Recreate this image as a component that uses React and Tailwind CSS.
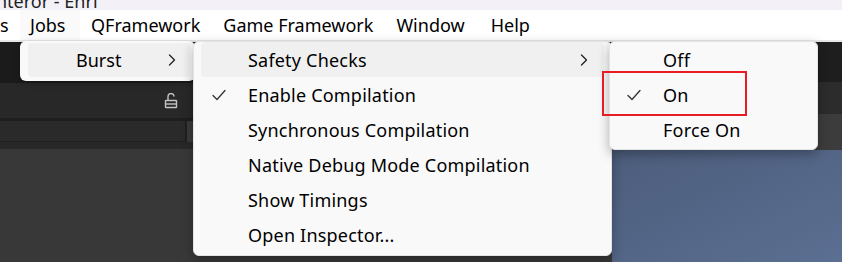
import React from 'react';

const font = { fontFamily: '"Noto Sans", "Open Sans", sans-serif' };

const Check = () => (
    <svg width="14" height="12" viewBox="0 0 14 12" fill="none">
        <path d="M1 6.5 L5 10.5 L13 1.5" stroke="#333" strokeWidth="1.3" strokeLinecap="round" strokeLinejoin="round" />
    </svg>
);

const Chevron = () => (
    <svg width="8" height="12" viewBox="0 0 8 12" fill="none">
        <path d="M1.5 1 L6.5 6 L1.5 11" stroke="#222" strokeWidth="1.3" strokeLinecap="round" strokeLinejoin="round" />
    </svg>
);

const Lock = () => (
    <svg width="14" height="16" viewBox="0 0 14 16" fill="none">
        <path d="M4 7 V3.5 A3 3 0 0 1 10 3.5" stroke="#c4c4c4" strokeWidth="1.4" />
        <rect x="1.5" y="7.5" width="11" height="7" rx="0.5" stroke="#c4c4c4" strokeWidth="1.4" />
        <line x1="1.5" y1="11" x2="12.5" y2="11" stroke="#c4c4c4" strokeWidth="1.4" />
    </svg>
);

const Row = ({ label, checked, sub, hover, checkW = 'w-[47px] pl-[11px]' }) => (
    <div className={`flex items-center h-[35px] mx-[7px] rounded-[4px] ${hover ? 'bg-[#f0f0f0]' : ''}`}>
        <div className={`${checkW} flex items-center shrink-0`}>
            {checked && <Check />}
        </div>
        <span className="text-[18px] text-black leading-none flex-1 tracking-[0.2px]">{label}</span>
        {sub && <span className="pr-[16px]"><Chevron /></span>}
    </div>
);

export default function App() {
    return (
        <div className="relative w-[842px] h-[262px] overflow-hidden bg-[#383838]" style={font}>
            {/* title bar */}
            <div className="h-[10px] bg-[#f3f1f7] overflow-hidden relative">
                <span className="absolute left-[-4px] top-[-12px] text-[18px] text-[#222]">nteror - Enri</span>
            </div>
            {/* menu bar */}
            <div className="h-[30px] bg-white flex items-center text-[18px] text-black">
                <span className="w-[20px] overflow-hidden">s</span>
                <span className="px-[10px] h-full flex items-center bg-[#fafafa] w-[60px]">Jobs</span>
                <span className="ml-[11px]">QFramework</span>
                <span className="ml-[23px]">Game Framework</span>
                <span className="ml-[23px]">Window</span>
                <span className="ml-[26px]">Help</span>
            </div>
            <div className="h-[2px] bg-[#e8e8e8]" />

            {/* editor body */}
            <div className="flex">
                <div className="w-[612px] flex flex-col">
                    <div className="h-[41px] bg-[#1b1b1b]" />
                    <div className="h-[35px] bg-[#282828] flex items-center justify-end pr-[434px]">
                        <Lock />
                    </div>
                    <div className="h-[3px] bg-[#1e1e1e]" />
                    <div className="h-[21px] bg-[#282828] flex">
                        <div className="w-[185px] bg-[#2a2a2a] border-b border-[#202020]" />
                        <div className="w-[2px] bg-[#1f1f1f]" />
                        <div className="w-[8px] bg-[#3a3a3a]" />
                    </div>
                    <div className="h-[7px] bg-[#282828]" />
                    <div className="flex-1 bg-[#383838]" />
                </div>
                <div className="flex-1 flex flex-col">
                    <div className="h-[40px] bg-[#1e1e1e]" />
                    <div className="h-[32px] bg-[#2c2c2c]" />
                    <div className="h-[36px] bg-[#3c3c3c]" />
                    <div className="h-[112px] bg-gradient-to-br from-[#4c5d7c] to-[#5b6f92]" />
                </div>
            </div>

            {/* Jobs menu */}
            <div className="absolute left-[20px] top-[41px] w-[175px] h-[40px] bg-[#f9f9f9] rounded-[6px] shadow-[0_2px_6px_rgba(0,0,0,0.25)] pt-[2px]">
                <div className="flex items-center h-[34px] ml-[8px] mr-[5px] rounded-[4px] bg-[#f0f0f0]">
                    <span className="pl-[48px] text-[18px] text-black flex-1 leading-none">Burst</span>
                    <span className="pr-[14px]"><Chevron /></span>
                </div>
            </div>

            {/* Burst submenu */}
            <div className="absolute left-[193px] top-[41px] w-[419px] h-[215px] bg-[#f9f9f9] rounded-[6px] border border-[#e4e4e4] shadow-[0_4px_12px_rgba(0,0,0,0.3)]">
                <Row label="Safety Checks" sub hover />
                <Row label="Enable Compilation" checked />
                <Row label="Synchronous Compilation" />
                <Row label="Native Debug Mode Compilation" />
                <Row label="Show Timings" />
                <Row label="Open Inspector..." />
            </div>

            {/* Safety Checks submenu */}
            <div className="absolute left-[609px] top-[41px] w-[209px] h-[109px] bg-[#f9f9f9] rounded-[6px] border border-[#e4e4e4] shadow-[0_4px_12px_rgba(0,0,0,0.3)]">
                <Row label="Off" checkW="w-[46px] pl-[10px]" />
                <Row label="On" checked checkW="w-[46px] pl-[10px]" />
                <Row label="Force On" checkW="w-[46px] pl-[10px]" />
            </div>

            {/* red highlight box */}
            <div className="absolute left-[602px] top-[71px] w-[145px] h-[45px] border-2 border-[#e81c24]" />
        </div>
    );
}
